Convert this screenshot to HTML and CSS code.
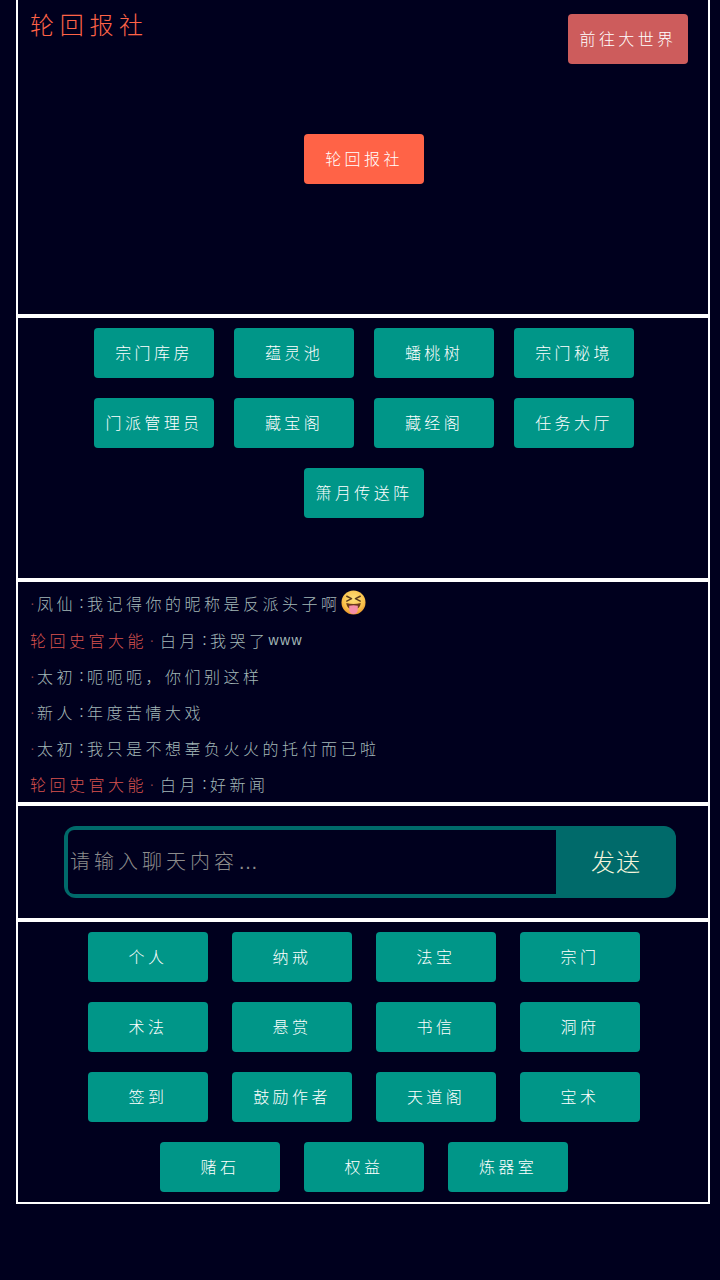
FILE: index.html
```html
<!DOCTYPE html>
<html lang="zh-CN">
<head>
<meta charset="utf-8">
<title>轮回报社</title>
<link rel="stylesheet" href="styles.css">
</head>
<body>
<main class="frame">
  <section class="panel panel-top">
    <header class="top-head">
      <h1 class="title">轮回报社</h1>
      <button class="btn btn-red">前往大世界</button>
    </header>
    <div class="top-center"><button class="btn btn-tomato">轮回报社</button></div>
  </section>
  <section class="panel panel-places">
    <div class="grid grid-places">
      <button class="btn">宗门库房</button>
      <button class="btn">蕴灵池</button>
      <button class="btn">蟠桃树</button>
      <button class="btn">宗门秘境</button>
      <button class="btn">门派管理员</button>
      <button class="btn">藏宝阁</button>
      <button class="btn">藏经阁</button>
      <button class="btn">任务大厅</button>
      <button class="btn">箫月传送阵</button>
    </div>
  </section>
  <section class="panel panel-chat">
    <p class="msg msg-first"><span class="dot">·</span>凤仙<span class="colon">:</span>我记得你的昵称是反派头子啊<svg class="emoji" viewBox="0 0 26 26" aria-hidden="true"><defs><radialGradient id="face" cx="50%" cy="35%" r="65%"><stop offset="0" stop-color="#fde07a"/><stop offset="0.7" stop-color="#f9c04a"/><stop offset="1" stop-color="#e9962a"/></radialGradient></defs><circle cx="13" cy="13" r="12.5" fill="url(#face)"/><path d="M6 6.5L11 9L6 11.5M20 6.5L15 9L20 11.5" fill="none" stroke="#5a3a1a" stroke-width="1.5" stroke-linecap="round" stroke-linejoin="round"/><path d="M5.5 13.5Q13 15.5 20.5 13.5Q20 18 17 19.5L9 19.5Q6 18 5.5 13.5Z" fill="#6b3a1c"/><path d="M8.5 16.5Q13 15 17.5 16.5L17.5 20.5Q17 25 13 25Q9 25 8.5 20.5Z" fill="#f58fa8"/></svg></p>
    <p class="msg"><span class="rank">轮回史官大能</span><span class="dot">·</span>白月<span class="colon">:</span>我哭了<span class="latin">www</span></p>
    <p class="msg"><span class="dot">·</span>太初<span class="colon">:</span>呃呃呃，你们别这样</p>
    <p class="msg"><span class="dot">·</span>新人<span class="colon">:</span>年度苦情大戏</p>
    <p class="msg"><span class="dot">·</span>太初<span class="colon">:</span>我只是不想辜负火火的托付而已啦</p>
    <p class="msg"><span class="rank">轮回史官大能</span><span class="dot">·</span>白月<span class="colon">:</span>好新闻</p>
  </section>
  <section class="panel panel-input">
    <form class="send-box">
      <input class="send-input" type="text" placeholder="请输入聊天内容…">
      <button class="send-btn" type="button">发送</button>
    </form>
  </section>
  <section class="panel panel-nav">
    <div class="grid grid-nav">
      <button class="btn">个人</button>
      <button class="btn">纳戒</button>
      <button class="btn">法宝</button>
      <button class="btn">宗门</button>
      <button class="btn">术法</button>
      <button class="btn">悬赏</button>
      <button class="btn">书信</button>
      <button class="btn">洞府</button>
      <button class="btn">签到</button>
      <button class="btn">鼓励作者</button>
      <button class="btn">天道阁</button>
      <button class="btn">宝术</button>
      <button class="btn">赌石</button>
      <button class="btn">权益</button>
      <button class="btn">炼器室</button>
    </div>
  </section>
</main>
</body>
</html>
```
FILE: styles.css
```css
* { box-sizing: border-box; }
html, body { margin: 0; padding: 0; background: #00001e; }
body {
  height: 1280px;
  overflow: hidden;
  font-family: "Noto Sans CJK SC", "Noto Sans", sans-serif;
  font-weight: 300;
}
.frame { width: 694px; margin-left: 16px; }
.panel { border: 2px solid #fff; }
.panel-top { height: 316px; border-top: 0; }
.panel-places { height: 264px; padding: 10px 0 0 2px; }
.panel-chat { height: 224px; padding: 2px 0 0 12px; overflow: hidden; }
.panel-input { height: 116px; padding: 20px 32px 0 46px; }
.panel-nav { height: 284px; padding: 10px 0 10px 2px; }

.top-head {
  display: flex;
  justify-content: space-between;
  align-items: flex-start;
  padding: 14px 20px 0 12px;
}
.title {
  margin: 0;
  font-size: 24px;
  line-height: 20px;
  font-weight: 300;
  letter-spacing: 5.7px;
  color: #ff6347;
}
.top-center { display: flex; justify-content: center; padding: 70px 0 0 2px; }

.btn {
  width: 120px;
  height: 50px;
  padding: 0 0 2px;
  border: 0;
  border-radius: 4px;
  background: #009688;
  color: #fff;
  font: inherit;
  font-size: 16px;
  letter-spacing: 3.4px;
  display: flex;
  align-items: center;
  justify-content: center;
}
.btn-red { background: #cd5c5c; }
.btn-tomato { background: #ff6347; }

.grid { display: flex; flex-wrap: wrap; justify-content: center; margin: 0 auto; }
.grid-places { width: 540px; gap: 20px; }
.grid-nav { width: 552px; gap: 20px 24px; }

.msg {
  display: flex;
  align-items: center;
  margin: 0;
  height: 36px;
  padding-bottom: 1px;
  font-size: 16px;
  letter-spacing: 3.5px;
  color: #a3b8b8;
  white-space: pre;
}
.msg-first { height: 38px; }
.dot { color: #8f4048; font-family: "Liberation Sans", sans-serif; font-size: 14px; width: 7px; }
.rank { color: #d9534f; }
.rank + .dot { width: 13px; text-align: center; }
.colon { font-family: "Liberation Sans", sans-serif; width: 11px; text-align: center; letter-spacing: 0; }
.latin { font-family: "Liberation Sans", sans-serif; font-size: 14px; letter-spacing: 1.4px; }
.emoji { width: 25px; height: 25px; flex: none; }

.send-box {
  display: flex;
  height: 72px;
  width: 612px;
  border-radius: 12px;
  background: #006a6a;
  overflow: hidden;
  padding: 4px 0 4px 4px;
}
.send-input {
  flex: 1;
  min-width: 0;
  border: 0;
  outline: 0;
  padding: 0 0 0 2px;
  background: #00001e;
  border-radius: 6px 0 0 6px;
  font-family: "Liberation Sans", "Noto Sans CJK SC", sans-serif;
  font-weight: 300;
  font-size: 20px;
  letter-spacing: 4px;
  color: #fff;
}
.send-input::placeholder { color: #8c8c8c; opacity: 1; }
.send-btn {
  width: 120px;
  margin: -4px 0;
  padding: 0 0 4px;
  border: 0;
  background: transparent;
  color: #f5f5dc;
  font: inherit;
  font-size: 24px;
  letter-spacing: 1px;
}
```
